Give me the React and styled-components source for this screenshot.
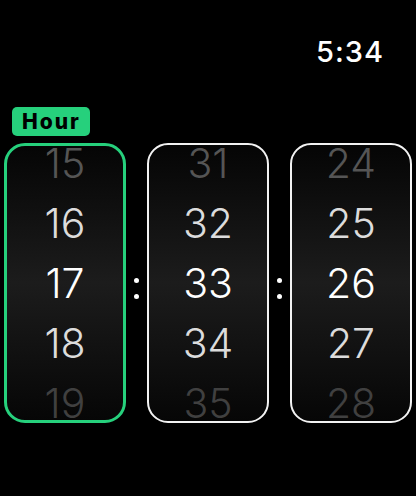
import React from 'react';
import styled, { createGlobalStyle } from 'styled-components';

const GlobalStyle = createGlobalStyle`
  html, body {
    margin: 0;
    padding: 0;
    background: #000;
  }
  body {
    font-family: Inter, "Liberation Sans", sans-serif;
    color: #fff;
  }
`;

const Screen = styled.div`
  width: 416px;
  height: 496px;
  background: #000;
  display: flex;
  flex-direction: column;
  overflow: hidden;
`;

const StatusBar = styled.div`
  display: flex;
  justify-content: flex-end;
  padding: 37px 32px 0 0;
`;

const Clock = styled.div`
  font-size: 29px;
  line-height: 29px;
  font-weight: 500;
  letter-spacing: 1px;
  color: #fff;
`;

const LabelRow = styled.div`
  display: flex;
  padding: 41px 0 0 12px;
`;

const Badge = styled.div`
  height: 29px;
  padding: 0 9px 0 10px;
  border-radius: 5px;
  background: #26d07c;
  color: #000;
  font-size: 21px;
  font-weight: 800;
  letter-spacing: 2px;
  line-height: 29px;
`;

const Wheels = styled.div`
  display: flex;
  align-items: stretch;
  padding: 7px 0 0 4px;
`;

const Wheel = styled.div`
  width: 122px;
  height: 280px;
  box-sizing: border-box;
  border: ${p => (p.$active ? '3px solid #26d07c' : '2px solid #f2f2f2')};
  border-radius: 21px;
  background: linear-gradient(#050505, #1c1c1c 50%, #060606);
  display: flex;
  flex-direction: column;
  justify-content: center;
  align-items: center;
  overflow: hidden;
`;

const Digit = styled.div`
  flex: none;
  height: 60px;
  line-height: 60px;
  font-size: 41px;
  font-weight: 300;
  color: ${p => p.$tone};
  text-align: center;
`;

const Separator = styled.div`
  width: 21px;
  display: flex;
  flex-direction: column;
  align-items: center;
  justify-content: center;
  gap: 11px;
  padding-top: 10px;
  box-sizing: border-box;
`;

const Dot = styled.span`
  width: 5px;
  height: 5px;
  border-radius: 50%;
  background: #fff;
`;

const tones = ['#555555', '#dcdcdc', '#ffffff', '#dcdcdc', '#404040'];

const columns = [
  { id: 'hour', values: [15, 16, 17, 18, 19], active: true },
  { id: 'minute', values: [31, 32, 33, 34, 35] },
  { id: 'second', values: [24, 25, 26, 27, 28] },
];

const Column = ({ values, active }) => (
  <Wheel $active={active}>
    {values.map((v, i) => (
      <Digit key={v} $tone={tones[i]}>{v}</Digit>
    ))}
  </Wheel>
);

const Colon = () => (
  <Separator>
    <Dot />
    <Dot />
  </Separator>
);

export default function App() {
  return (
    <>
      <GlobalStyle />
      <Screen>
        <StatusBar>
          <Clock>5:34</Clock>
        </StatusBar>
        <LabelRow>
          <Badge>Hour</Badge>
        </LabelRow>
        <Wheels>
          {columns.map((c, i) => (
            <React.Fragment key={c.id}>
              {i > 0 && <Colon />}
              <Column values={c.values} active={c.active} />
            </React.Fragment>
          ))}
        </Wheels>
      </Screen>
    </>
  );
}
